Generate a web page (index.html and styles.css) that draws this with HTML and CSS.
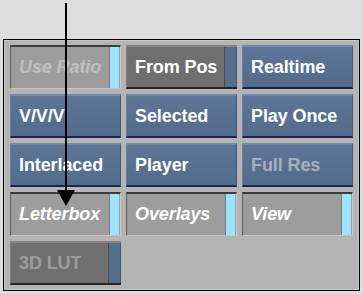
FILE: index.html
```html
<!DOCTYPE html>
<html lang="en">
<head>
    <meta charset="UTF-8">
    <title>Player Options</title>
    <link rel="stylesheet" href="styles.css">
</head>
<body>
    <div class="screen">
        <div class="panel">
            <div class="btn inset dim"><span class="label">Use Ratio</span><span class="led"></span></div>
            <div class="btn toggle"><span class="label">From Pos</span><span class="tab"></span></div>
            <div class="btn blue"><span class="label">Realtime</span></div>

            <div class="btn blue"><span class="label">V/V/V</span></div>
            <div class="btn blue"><span class="label">Selected</span></div>
            <div class="btn blue"><span class="label">Play Once</span></div>

            <div class="btn blue"><span class="label">Interlaced</span></div>
            <div class="btn blue"><span class="label">Player</span></div>
            <div class="btn blue dim"><span class="label">Full Res</span></div>

            <div class="btn inset"><span class="label">Letterbox</span><span class="led"></span></div>
            <div class="btn inset"><span class="label">Overlays</span><span class="led"></span></div>
            <div class="btn inset"><span class="label">View</span><span class="led"></span></div>

            <div class="btn toggle dim"><span class="label">3D LUT</span><span class="tab"></span></div>
        </div>

        <!-- callout arrow drawn over the panel -->
        <svg class="pointer" width="363" height="294" viewBox="0 0 363 294">
            <line x1="66" y1="3" x2="66" y2="192" stroke="#000" stroke-width="2"/>
            <polygon points="57,190 75,190 66,206" fill="#000"/>
        </svg>
    </div>
</body>
</html>
```

FILE: styles.css
```css
body {
    margin: 0;
    background-color: #dddddd;
    font-family: "Liberation Sans", Arial, sans-serif;
}
.screen {
    position: relative;
    width: 363px;
    height: 294px;
    padding: 39px 0 0 3px;
    box-sizing: border-box;
}
.panel {
    width: 357px;
    box-sizing: border-box;
    border: 1px solid #000;
    box-shadow: inset 0 0 0 1px #c6c6c6;
    background-color: #b4b4b4;
    padding: 5px 6px;
    display: grid;
    grid-template-columns: repeat(3, 111px);
    grid-auto-rows: 44px;
    gap: 5px;
}
.btn {
    display: flex;
    align-items: stretch;
    box-sizing: border-box;
    overflow: hidden;
}
.label {
    flex: 1;
    display: flex;
    align-items: center;
    padding-left: 8px;
    font-size: 18px;
    font-weight: bold;
    color: #fff;
    white-space: nowrap;
    letter-spacing: -0.1px;
}
.blue {
    background: linear-gradient(#5d7697, #536b8b);
    border-top: 2px solid #7189a8;
    border-left: 1px solid #6880a0;
    border-right: 1px solid #41567a;
    border-bottom: 2px solid #20204c;
}
.blue.dim .label {
    color: #a7b0bd;
}
.toggle {
    background-color: #6f6f6f;
    border-top: 2px solid #858585;
    border-left: 1px solid #7d7d7d;
    border-bottom: 2px solid #252525;
}
.toggle .tab {
    width: 11px;
    background-color: #566e8e;
    border-left: 1px solid #4d4d4d;
    border-right: 1px solid #41567a;
}
.toggle.dim .label {
    color: #9c9c9c;
}
.inset {
    background-color: #9d9d9d;
    border-top: 2px solid #3c3c3c;
    border-left: 1px solid #5a5a5a;
    border-right: 1px solid #cacaca;
    border-bottom: 1px solid #c4c4c4;
}
.inset .label {
    font-style: italic;
}
.inset.dim .label {
    color: #bfbfbf;
}
.inset .led {
    width: 9px;
    margin-right: 1px;
    background-color: #9be3ff;
    border-left: 1px solid #7a7a7a;
}
.pointer {
    position: absolute;
    left: 0;
    top: 0;
    pointer-events: none;
}
```
